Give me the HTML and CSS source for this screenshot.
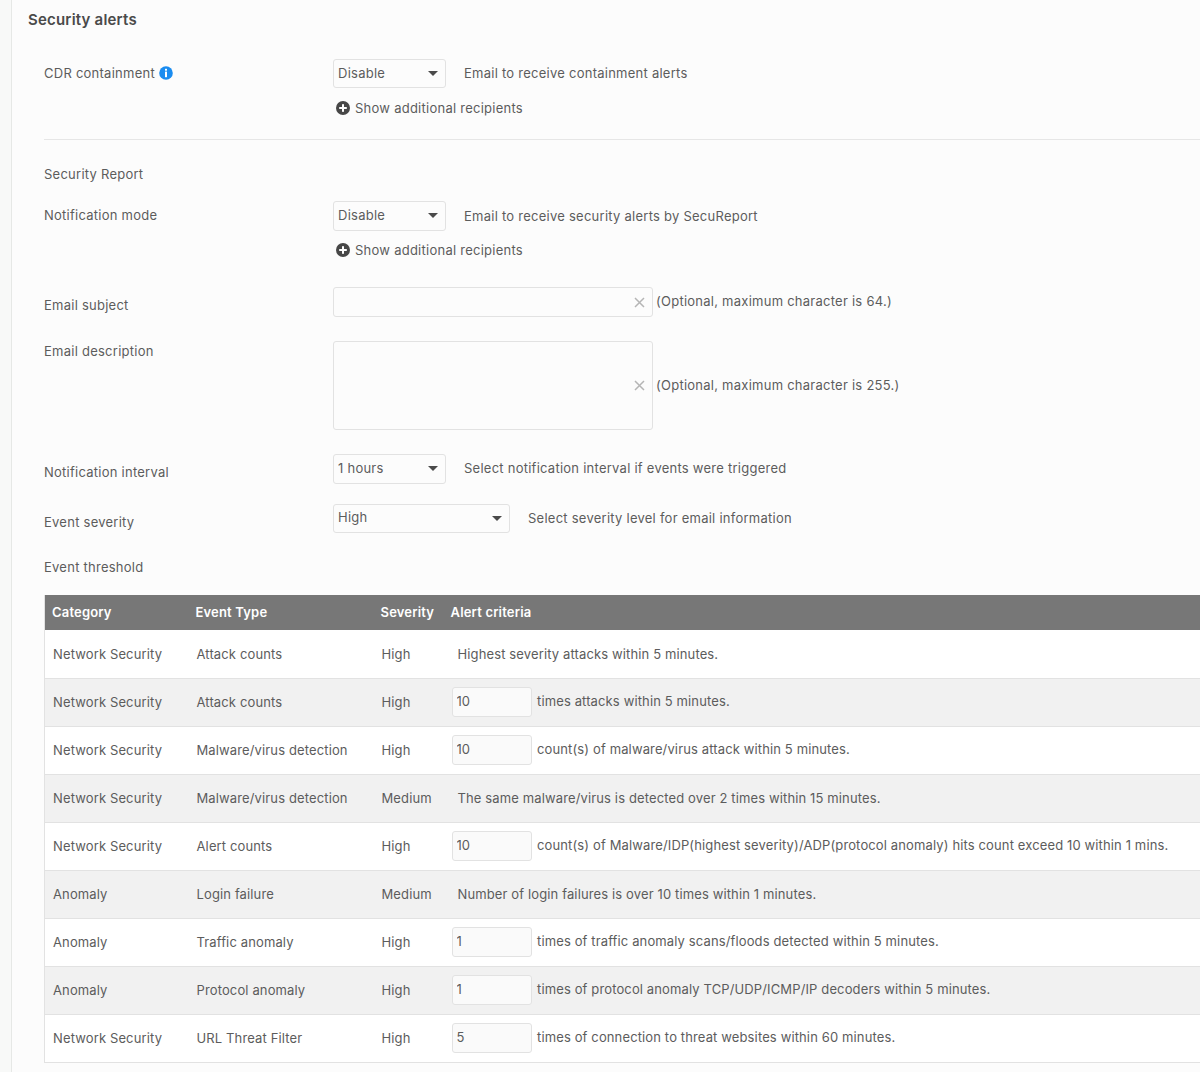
FILE: index.html
```html
<!DOCTYPE html>
<html lang="en">
<head>
    <meta charset="UTF-8">
    <title>Security alerts</title>
    <link rel="stylesheet" href="styles.css">
</head>
<body>
    <div class="panel">
        <h2 class="panel-title">Security alerts</h2>

        <div class="panel-body">
            <div class="form-row row-cdr">
                <label class="row-label">CDR containment
                    <svg class="info-icon" viewBox="0 0 14 14" width="14" height="14"><circle cx="7" cy="7" r="6.8" fill="#1a8cf0"/><rect x="6" y="5.6" width="2" height="5.6" fill="#fff"/><rect x="6" y="2.8" width="2" height="1.9" fill="#fff"/></svg>
                </label>
                <div class="row-field">
                    <div class="select-wrap select-short"><select><option>Disable</option></select></div>
                    <span class="hint hint-select">Email to receive containment alerts</span>
                </div>
            </div>
            <a class="add-link link-cdr">
                <svg viewBox="0 0 14 14" width="14" height="14"><circle cx="7" cy="7" r="7" fill="#474747"/><rect x="3.2" y="6" width="7.6" height="2" fill="#fff"/><rect x="6" y="3.2" width="2" height="7.6" fill="#fff"/></svg>
                Show additional recipients
            </a>

            <hr class="divider">

            <div class="section-label label-report">Security Report</div>

            <div class="form-row row-mode">
                <label class="row-label">Notification mode</label>
                <div class="row-field">
                    <div class="select-wrap"><select><option>Disable</option></select></div>
                    <span class="hint hint-select">Email to receive security alerts by SecuReport</span>
                </div>
            </div>
            <a class="add-link link-mode">
                <svg viewBox="0 0 14 14" width="14" height="14"><circle cx="7" cy="7" r="7" fill="#474747"/><rect x="3.2" y="6" width="7.6" height="2" fill="#fff"/><rect x="6" y="3.2" width="2" height="7.6" fill="#fff"/></svg>
                Show additional recipients
            </a>

            <div class="form-row row-subject">
                <label class="row-label label-low">Email subject</label>
                <div class="row-field">
                    <div class="text-box box-subject">
                        <svg class="clear-icon" viewBox="0 0 11 11" width="11" height="11"><path d="M1 1l9 9M10 1l-9 9" stroke="#b5b5b5" stroke-width="1.5" fill="none"/></svg>
                    </div>
                    <span class="hint hint-box">(Optional, maximum character is 64.)</span>
                </div>
            </div>

            <div class="form-row row-desc">
                <label class="row-label label-top">Email description</label>
                <div class="row-field">
                    <div class="text-box box-desc">
                        <svg class="clear-icon" viewBox="0 0 11 11" width="11" height="11"><path d="M1 1l9 9M10 1l-9 9" stroke="#b5b5b5" stroke-width="1.5" fill="none"/></svg>
                    </div>
                    <span class="hint hint-box">(Optional, maximum character is 255.)</span>
                </div>
            </div>

            <div class="form-row row-interval">
                <label class="row-label label-low">Notification interval</label>
                <div class="row-field">
                    <div class="select-wrap"><select><option>1 hours</option></select></div>
                    <span class="hint hint-select">Select notification interval if events were triggered</span>
                </div>
            </div>

            <div class="form-row row-severity">
                <label class="row-label label-low">Event severity</label>
                <div class="row-field">
                    <div class="select-wrap select-wide select-short"><select><option>High</option></select></div>
                    <span class="hint hint-select">Select severity level for email information</span>
                </div>
            </div>

            <div class="section-label label-threshold">Event threshold</div>

            <table class="alert-table">
                <colgroup>
                    <col class="col-category">
                    <col class="col-type">
                    <col class="col-severity">
                    <col>
                </colgroup>
                <thead>
                    <tr>
                        <th>Category</th>
                        <th>Event Type</th>
                        <th>Severity</th>
                        <th>Alert criteria</th>
                    </tr>
                </thead>
                <tbody>
                    <tr>
                        <td>Network Security</td>
                        <td>Attack counts</td>
                        <td>High</td>
                        <td><span class="criteria-text">Highest severity attacks within 5 minutes.</span></td>
                    </tr>
                    <tr>
                        <td>Network Security</td>
                        <td>Attack counts</td>
                        <td>High</td>
                        <td><input class="num-input" value="10"><span class="criteria-after">times attacks within 5 minutes.</span></td>
                    </tr>
                    <tr>
                        <td>Network Security</td>
                        <td>Malware/virus detection</td>
                        <td>High</td>
                        <td><input class="num-input" value="10"><span class="criteria-after">count(s) of malware/virus attack within 5 minutes.</span></td>
                    </tr>
                    <tr>
                        <td>Network Security</td>
                        <td>Malware/virus detection</td>
                        <td>Medium</td>
                        <td><span class="criteria-text">The same malware/virus is detected over 2 times within 15 minutes.</span></td>
                    </tr>
                    <tr>
                        <td>Network Security</td>
                        <td>Alert counts</td>
                        <td>High</td>
                        <td><input class="num-input" value="10"><span class="criteria-after">count(s) of Malware/IDP(highest severity)/ADP(protocol anomaly) hits count exceed 10 within 1 mins.</span></td>
                    </tr>
                    <tr>
                        <td>Anomaly</td>
                        <td>Login failure</td>
                        <td>Medium</td>
                        <td><span class="criteria-text">Number of login failures is over 10 times within 1 minutes.</span></td>
                    </tr>
                    <tr>
                        <td>Anomaly</td>
                        <td>Traffic anomaly</td>
                        <td>High</td>
                        <td><input class="num-input" value="1"><span class="criteria-after">times of traffic anomaly scans/floods detected within 5 minutes.</span></td>
                    </tr>
                    <tr>
                        <td>Anomaly</td>
                        <td>Protocol anomaly</td>
                        <td>High</td>
                        <td><input class="num-input" value="1"><span class="criteria-after">times of protocol anomaly TCP/UDP/ICMP/IP decoders within 5 minutes.</span></td>
                    </tr>
                    <tr>
                        <td>Network Security</td>
                        <td>URL Threat Filter</td>
                        <td>High</td>
                        <td><input class="num-input" value="5"><span class="criteria-after">times of connection to threat websites within 60 minutes.</span></td>
                    </tr>
                </tbody>
            </table>
        </div>
    </div>
</body>
</html>
```

FILE: styles.css
```css
:root {
    --text-color: #5c5c5c;
    --border-color: #e2e2e2;
    --panel-color: #fcfcfc;
}

* {
    margin: 0;
    padding: 0;
    box-sizing: border-box;
}

html, body {
    height: 100%;
    overflow: hidden;
}

body {
    font-family: "Inter", sans-serif;
    font-size: 13px;
    line-height: 18px;
    letter-spacing: 0.25px;
    color: var(--text-color);
    background-color: #f8f9f8;
    padding-left: 11px;
}

.panel {
    height: 100%;
    background-color: var(--panel-color);
    border-left: 1px solid #e6e8e6;
    overflow: hidden;
}

.panel-title {
    font-size: 15px;
    font-weight: 600;
    letter-spacing: 0.2px;
    color: #4a4a4a;
    line-height: 20px;
    padding: 10px 0 0 16px;
}

.panel-body {
    padding-left: 32px;
    width: 1200px;
}

.form-row {
    display: grid;
    grid-template-columns: 289px 1fr;
    align-items: start;
}

.row-label {
    display: flex;
    align-items: center;
    gap: 4px;
    height: 28px;
}

.label-low {
    padding-top: 6px;
    height: 30px;
}

.label-top {
    height: 20px;
}

.row-field {
    display: flex;
    align-items: center;
}

.row-cdr { margin-top: 29px; }
.row-mode { margin-top: 18px; }
.row-subject { margin-top: 28px; }
.row-desc { margin-top: 24px; }
.row-interval { margin-top: 24px; }
.row-severity { margin-top: 20px; }

.select-wrap {
    position: relative;
    width: 113px;
    height: 30px;
}

.select-short {
    height: 29px;
}

.select-wide {
    width: 177px;
}

.select-wrap::after {
    content: "";
    position: absolute;
    right: 8px;
    top: 12px;
    border-left: 5.5px solid transparent;
    border-right: 5.5px solid transparent;
    border-top: 5px solid #4a4a4a;
}

.select-wrap select {
    appearance: none;
    width: 100%;
    height: 100%;
    font: inherit;
    letter-spacing: inherit;
    color: var(--text-color);
    background-color: var(--panel-color);
    border: 1px solid var(--border-color);
    border-radius: 3px;
    padding: 0 0 2px 4px;
}

.select-wide select {
    padding-bottom: 4px;
}

.hint {
    padding-bottom: 2px;
}

.row-mode .hint {
    padding-bottom: 0;
}

.hint-select {
    margin-left: 18px;
}

.hint-box {
    margin-left: 3px;
}

.add-link {
    display: flex;
    align-items: center;
    gap: 5px;
    margin-left: 292px;
    height: 18px;
}

.link-cdr { margin-top: 11px; }
.link-mode { margin-top: 10px; }

.divider {
    border: none;
    border-top: 1px solid #e6e6e6;
    margin-top: 22px;
}

.section-label {
    height: 18px;
}

.label-report { margin-top: 25px; }
.label-threshold { margin-top: 24px; }

.text-box {
    display: flex;
    align-items: center;
    justify-content: flex-end;
    width: 320px;
    background-color: var(--panel-color);
    border: 1px solid var(--border-color);
    border-radius: 3px;
    padding-right: 7px;
}

.box-subject { height: 30px; }
.box-desc { height: 89px; }

.clear-icon {
    flex: none;
}

.alert-table {
    width: 1240px;
    margin-top: 19px;
    table-layout: fixed;
    border-collapse: collapse;
    border-left: 1px solid var(--border-color);
    letter-spacing: 0.13px;
}

.col-category { width: 144px; }
.col-type { width: 185px; }
.col-severity { width: 70px; }

.alert-table th {
    height: 35px;
    padding: 0 0 2px 7px;
    background-color: #777777;
    color: #ffffff;
    font-weight: 600;
    letter-spacing: 0.18px;
    text-align: left;
}

.alert-table td {
    height: 48px;
    padding-left: 8px;
    border-bottom: 1px solid var(--border-color);
    background-color: #ffffff;
    white-space: nowrap;
}

.alert-table tbody tr:nth-child(even) td {
    background-color: #f1f1f1;
}

.criteria-text {
    margin-left: 6px;
}

.criteria-after {
    margin-left: 5.5px;
}

.num-input {
    width: 80px;
    height: 30px;
    padding: 0 0 3px 4px;
    font: inherit;
    color: var(--text-color);
    background-color: #fafafa;
    border: 1px solid var(--border-color);
    border-radius: 3px;
    vertical-align: middle;
}
```
